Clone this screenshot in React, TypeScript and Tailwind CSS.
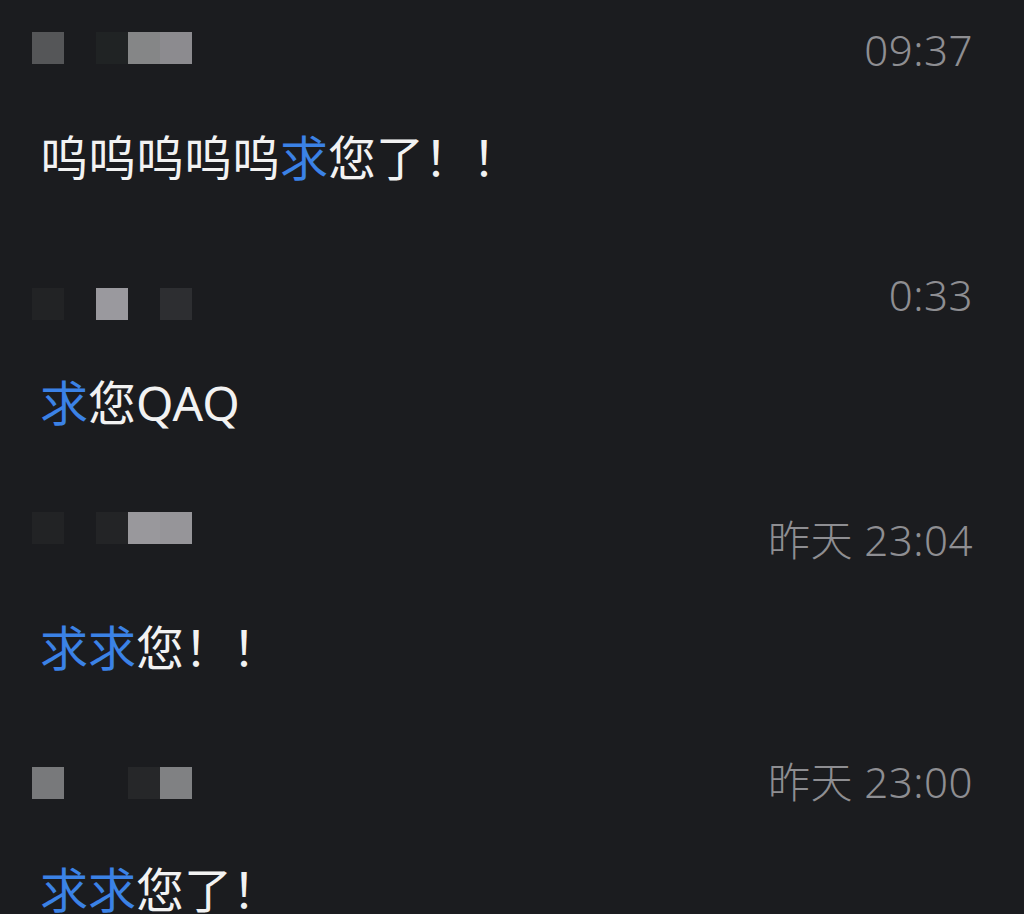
const blank = "bg-transparent";

const messages = [
  {
    time: "09:37",
    headTop: "mt-[18px]",
    blockTop: "mt-[14px]",
    blocks: ["bg-[#555658]", blank, "bg-[#202324]", "bg-[#858687]", "bg-[#8c8b8f]"],
    parts: [
      { t: "呜呜呜呜呜", blue: false },
      { t: "求", blue: true },
      { t: "您了！！", blue: false },
    ],
  },
  {
    time: "0:33",
    headTop: "mt-[73px]",
    blockTop: "mt-[25px]",
    blocks: ["bg-[#222325]", blank, "bg-[#9a999e]", blank, "bg-[#2d2e31]"],
    parts: [
      { t: "求", blue: true },
      { t: "您QAQ", blue: false },
    ],
  },
  {
    time: "昨天 23:04",
    headTop: "mt-[73px]",
    blockTop: "mt-[4px]",
    blocks: ["bg-[#222325]", blank, "bg-[#232426]", "bg-[#99989c]", "bg-[#969599]"],
    parts: [
      { t: "求求", blue: true },
      { t: "您！！", blue: false },
    ],
  },
  {
    time: "昨天 23:00",
    headTop: "mt-[70px]",
    blockTop: "mt-[17px]",
    blocks: ["bg-[#78797b]", blank, blank, "bg-[#262729]", "bg-[#808183]"],
    parts: [
      { t: "求求", blue: true },
      { t: "您了！", blue: false },
    ],
  },
];

export default function App() {
  return (
    <div
      className="w-[1024px] h-[914px] overflow-hidden bg-[#1b1c1f]"
      style={{ fontFamily: '"Noto Sans", "Noto Sans CJK SC", sans-serif' }}
    >
      {messages.map((m, i) => (
        <div key={i}>
          <div className={`${m.headTop} h-[64px] flex items-start justify-between pl-[32px] pr-[51px]`}>
            <div className={`${m.blockTop} flex`}>
              {m.blocks.map((b, j) => (
                <div key={j} className={`w-[32px] h-[32px] ${b}`} />
              ))}
            </div>
            <div className="leading-[64px] text-[42px] font-light text-[#8e8e92] tracking-[0.5px]">
              {m.time}
            </div>
          </div>
          <div className="mt-[44px] h-[64px] flex items-center pl-[40px] text-[48px] text-[#f2f2f2]">
            {m.parts.map((p, k) => (
              <span key={k} className={p.blue ? "text-[#3b82e6]" : ""}>
                {p.t}
              </span>
            ))}
          </div>
        </div>
      ))}
    </div>
  );
}
